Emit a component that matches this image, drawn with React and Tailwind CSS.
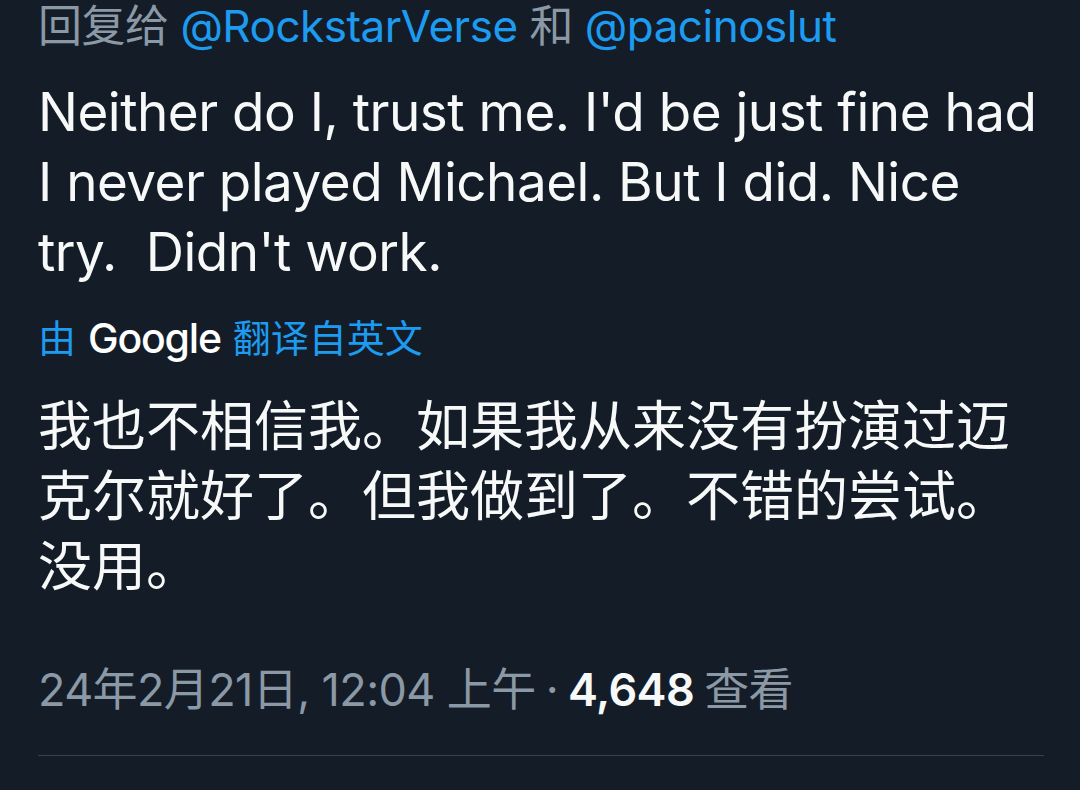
export default function App() {
  const font = { fontFamily: "Inter, 'Noto Sans CJK SC', sans-serif" };
  return (
    <div
      className="w-[1080px] h-[790px] bg-[#141d27] text-white overflow-hidden"
      style={font}
    >
      <div className="pl-[38px] pr-[36px] pt-[1px]">
        <p className="text-[44px] leading-[50px] text-[#8b98a5] whitespace-nowrap tracking-[-0.5px]">
          回复给 <span className="text-[#1d9bf0]">@RockstarVerse</span> 和{" "}
          <span className="text-[#1d9bf0]">@pacinoslut</span>
        </p>

        <p className="mt-[26px] text-[53px] leading-[70px] tracking-[-0.5px] text-[#f7f9f9] whitespace-nowrap">
          Neither do I, trust me. I'd be just fine had
          <br />I never played Michael. But I did. Nice
          <br />
          try.&nbsp; Didn't work.
        </p>

        <div className="mt-[26px] flex items-center gap-[12px] text-[38px] leading-[50px] text-[#1d9bf0]">
          <span>由</span>
          <span className="text-white text-[41px] font-medium tracking-[-1.2px]">
            Google
          </span>
          <span>翻译自英文</span>
        </div>

        <p className="mt-[29px] text-[54px] leading-[70px] text-[#f7f9f9]">
          我也不相信我。如果我从来没有扮演过迈克尔就好了。但我做到了。不错的尝试。没用。
        </p>

        <div className="mt-[63px] flex items-center whitespace-nowrap text-[45px] leading-[50px] text-[#8b98a5] tracking-[-0.6px]">
          <span>24年2月21日, 12:04 上午</span>
          <span className="mx-[10px]">·</span>
          <span className="font-semibold text-[#f7f9f9]">4,648</span>
          <span className="ml-[10px]">查看</span>
        </div>

        <div className="mt-[40px] h-px bg-[#38444d]" />
      </div>
    </div>
  );
}
